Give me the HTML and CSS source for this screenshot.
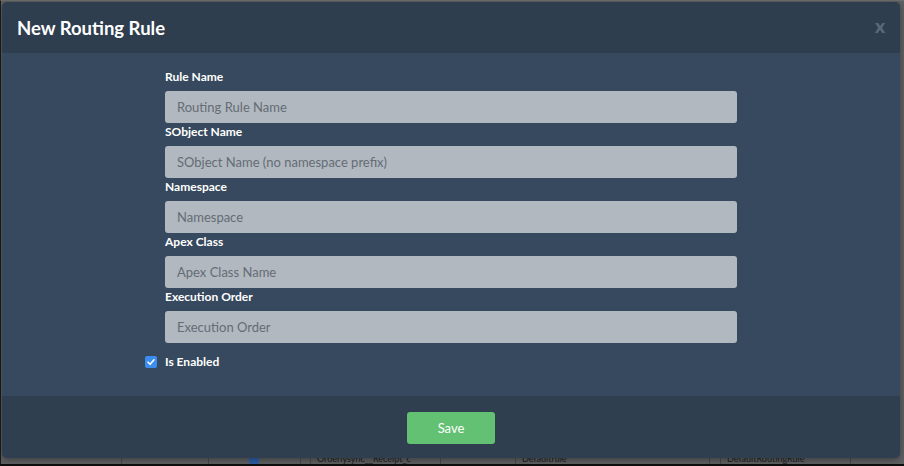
FILE: index.html
```html
<!DOCTYPE html>
<html lang="en">
<head>
<meta charset="utf-8">
<title>New Routing Rule</title>
<link rel="stylesheet" href="styles.css">
</head>
<body>
<div class="frame">
  <div class="backdrop">
    <div class="bg-row">
      <div class="bg-cell c1"></div>
      <div class="bg-cell c2"></div>
      <div class="bg-cell c3"><span class="bg-check"></span></div>
      <div class="bg-cell c4"></div>
      <div class="bg-cell c5">Orderlysync__Receipt_c</div>
      <div class="bg-cell c6"></div>
      <div class="bg-cell c7">Defaultrule</div>
      <div class="bg-cell c8"></div>
      <div class="bg-cell c9">DefaultRoutingRule</div>
      <div class="bg-cell c10"></div>
    </div>
  </div>
  <div class="modal">
    <div class="modal-header">
      <h2 class="modal-title">New Routing Rule</h2>
      <span class="close">x</span>
    </div>
    <div class="modal-body">
      <form class="form">
        <label class="field-label">Rule Name</label>
        <input class="field-input" type="text" placeholder="Routing Rule Name">
        <label class="field-label">SObject Name</label>
        <input class="field-input" type="text" placeholder="SObject Name (no namespace prefix)">
        <label class="field-label">Namespace</label>
        <input class="field-input" type="text" placeholder="Namespace">
        <label class="field-label">Apex Class</label>
        <input class="field-input" type="text" placeholder="Apex Class Name">
        <label class="field-label">Execution Order</label>
        <input class="field-input" type="text" placeholder="Execution Order">
        <label class="check-row">
          <span class="checkbox"><svg viewBox="0 0 12 12" width="12" height="12"><path d="M3 6.2 L5.1 8.3 L9 3.8" fill="none" stroke="#fff" stroke-width="1.6" stroke-linecap="round" stroke-linejoin="round"/></svg></span>
          <span class="check-text">Is Enabled</span>
        </label>
      </form>
    </div>
    <div class="modal-footer">
      <button class="save-btn" type="button">Save</button>
    </div>
  </div>
</div>
</body>
</html>
```

FILE: styles.css
```css
* { box-sizing: border-box; }
html, body {
  margin: 0;
  padding: 0;
  width: 904px;
  height: 466px;
  overflow: hidden;
  background: #111;
}
.frame {
  position: relative;
  width: 904px;
  height: 466px;
  border-left: 1px solid #1b1b1b;
  border-top: 1px solid #6d6d6d;
  border-bottom: 2px solid #0e0e0e;
  background: #5d5f61;
  font-family: Lato, "Liberation Sans", sans-serif;
}
.backdrop {
  height: 100%;
  display: flex;
  flex-direction: column;
  justify-content: flex-end;
}
.bg-row {
  display: flex;
  height: 10px;
  color: #1e1e1e;
  font-size: 9px;
  line-height: 10px;
}
.bg-cell {
  border-right: 1px solid #4a4a4a;
  white-space: nowrap;
  overflow: hidden;
  padding-left: 6px;
}
.c1 { width: 121px; }
.c2 { width: 87px; }
.c3 { width: 92px; padding-left: 40px; }
.c4 { width: 10px; padding: 0; }
.c5 { width: 130px; }
.c6 { width: 75px; }
.c7 { width: 194px; }
.c8 { width: 11px; padding: 0; }
.c9 { width: 130px; }
.c10 { flex: 1; border-right: 0; }
.bg-check {
  display: inline-block;
  width: 10px;
  height: 10px;
  background: #2b5ea8;
  border-radius: 2px;
  vertical-align: top;
}
.modal {
  position: absolute;
  left: 1px;
  top: 1px;
  width: 898px;
  height: 456px;
  border-radius: 5px;
  overflow: hidden;
  background: #36495e;
  display: flex;
  flex-direction: column;
  box-shadow: 0 2px 6px rgba(0,0,0,0.35);
}
.modal-header {
  height: 51px;
  background: #2f3e4f;
  display: flex;
  align-items: center;
  justify-content: space-between;
  padding: 0 15px 0 15px;
}
.modal-title {
  margin: 0;
  color: #ffffff;
  font-size: 18.5px;
  font-weight: 700;
}
.close {
  color: #5a6a7b;
  font-size: 19px;
  font-weight: 900;
  line-height: 1;
  margin-top: -4px;
}
.modal-body {
  flex: 1;
  padding: 17px 0 0 0;
}
.form {
  width: 572px;
  margin: 0 0 0 163px;
  display: flex;
  flex-direction: column;
}
.field-label {
  display: block;
  color: #ffffff;
  font-size: 12px;
  font-weight: 700;
  line-height: 14px;
  margin-bottom: 7px;
}
.field-input {
  display: block;
  width: 572px;
  height: 32px;
  border: 0;
  border-radius: 3px;
  background: #b1b8c0;
  padding: 0 12px;
  font-family: Lato, "Liberation Sans", sans-serif;
  font-size: 13px;
  color: #333;
  margin-bottom: 2px;
  outline: none;
}
.field-input::placeholder {
  color: #656c74;
  opacity: 1;
}
.check-row {
  display: flex;
  align-items: center;
  margin-top: 9px;
  margin-left: -20px;
  gap: 8px;
}
.checkbox {
  width: 12px;
  height: 12px;
  border-radius: 2px;
  background: #3b8ef0;
  display: flex;
}
.check-text {
  color: #ffffff;
  font-size: 12px;
  font-weight: 700;
}
.modal-footer {
  height: 62px;
  background: #2f3f50;
  display: flex;
  justify-content: center;
  padding-top: 16px;
}
.save-btn {
  width: 88px;
  height: 32px;
  border: 0;
  border-radius: 3px;
  background: #62c172;
  color: #ffffff;
  font-family: Lato, "Liberation Sans", sans-serif;
  font-size: 13px;
  font-weight: 400;
}
```
